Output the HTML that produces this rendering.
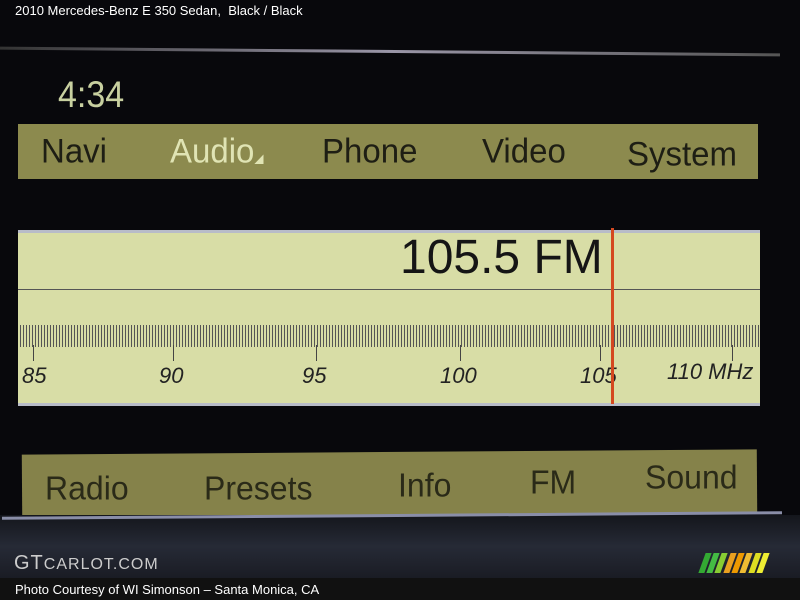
<html><head><style>
body{margin:0;width:800px;height:600px;background:#08080c;position:relative;overflow:hidden;font-family:"Liberation Sans",sans-serif}
div{position:absolute}
.t{color:#fff;font-size:13px}
.nav{font-size:33px;color:#1e1e14;top:132px;transform:scaleY(1.05)}
.bot{font-size:32px;color:#2a2a18;transform:scaleY(1.05)}
.sc{font-style:italic;font-size:22px;color:#222;top:363px}
.mj{width:1px;background:#444;top:345px;height:16px}
.st{width:6px;height:20px;top:553px;transform:skewX(-20deg)}
</style></head><body>
<div class="t" style="left:15px;top:3px">2010 Mercedes-Benz E 350 Sedan,&nbsp; Black / Black</div>
<div style="left:0;top:50px;width:780px;height:3px;background:linear-gradient(90deg,#333,#9a96a8,#555);transform:rotate(0.5deg)"></div>
<div style="left:58px;top:76px;font-size:34px;color:#c8d0a0;transform:scaleY(1.1)">4:34</div>
<div style="left:18px;top:124px;width:740px;height:55px;background:#8c8a4e"></div>
<div class="nav" style="left:41px">Navi</div>
<div class="nav" style="left:170px;color:#e0e4b4">Audio<span style="font-size:12px">◢</span></div>
<div class="nav" style="left:322px">Phone</div>
<div class="nav" style="left:482px">Video</div>
<div class="nav" style="left:627px;top:135px">System</div>
<div style="left:18px;top:230px;width:742px;height:176px;background:#d8dda6;border-top:3px solid #b8bcc8;border-bottom:3px solid #b8bcc8;box-sizing:border-box"></div>
<div style="left:400px;top:230px;font-size:48px;color:#151515">105.5 FM</div>
<div style="left:18px;top:289px;width:742px;height:1px;background:#555"></div>
<div style="left:20px;top:325px;width:740px;height:22px;background:repeating-linear-gradient(90deg,#555 0 1px,transparent 1px 3px)"></div>
<div class="mj" style="left:33px"></div><div class="mj" style="left:173px"></div><div class="mj" style="left:316px"></div><div class="mj" style="left:460px"></div><div class="mj" style="left:600px"></div><div class="mj" style="left:732px"></div>
<div class="sc" style="left:22px">85</div>
<div class="sc" style="left:159px">90</div>
<div class="sc" style="left:302px">95</div>
<div class="sc" style="left:440px">100</div>
<div class="sc" style="left:580px">105</div>
<div class="sc" style="left:667px;top:359px">110 MHz</div>
<div style="left:611px;top:228px;width:3px;height:176px;background:#d44820"></div>
<div style="left:22px;top:452px;width:735px;height:63px;background:#85824a;transform:rotate(-0.4deg)"></div>
<div class="bot" style="left:45px;top:470px">Radio</div>
<div class="bot" style="left:204px;top:470px">Presets</div>
<div class="bot" style="left:398px;top:467px">Info</div>
<div class="bot" style="left:530px;top:464px">FM</div>
<div class="bot" style="left:645px;top:459px">Sound</div>
<div style="left:0;top:515px;width:800px;height:63px;background:linear-gradient(#14161c,#262a36 50%,#1a1c24)"></div>
<div style="left:2px;top:514px;width:780px;height:3px;background:#8a8ea8;transform:rotate(-0.4deg)"></div>
<div style="left:14px;top:552px;font-size:20px;color:#ccc;letter-spacing:1px">GT<span style="font-size:16px">CARLOT.COM</span></div>
<div class="st" style="left:702px;background:#3a3"></div><div class="st" style="left:710px;background:#4b4"></div><div class="st" style="left:718px;background:#8c3"></div>
<div class="st" style="left:727px;background:#e9a020"></div><div class="st" style="left:735px;background:#e90"></div><div class="st" style="left:743px;background:#eb3"></div>
<div class="st" style="left:752px;background:#dd2"></div><div class="st" style="left:760px;background:#ee3"></div>
<div style="left:0;top:578px;width:800px;height:22px;background:#111"></div>
<div class="t" style="left:15px;top:582px">Photo Courtesy of WI Simonson – Santa Monica, CA</div>
</body></html>
